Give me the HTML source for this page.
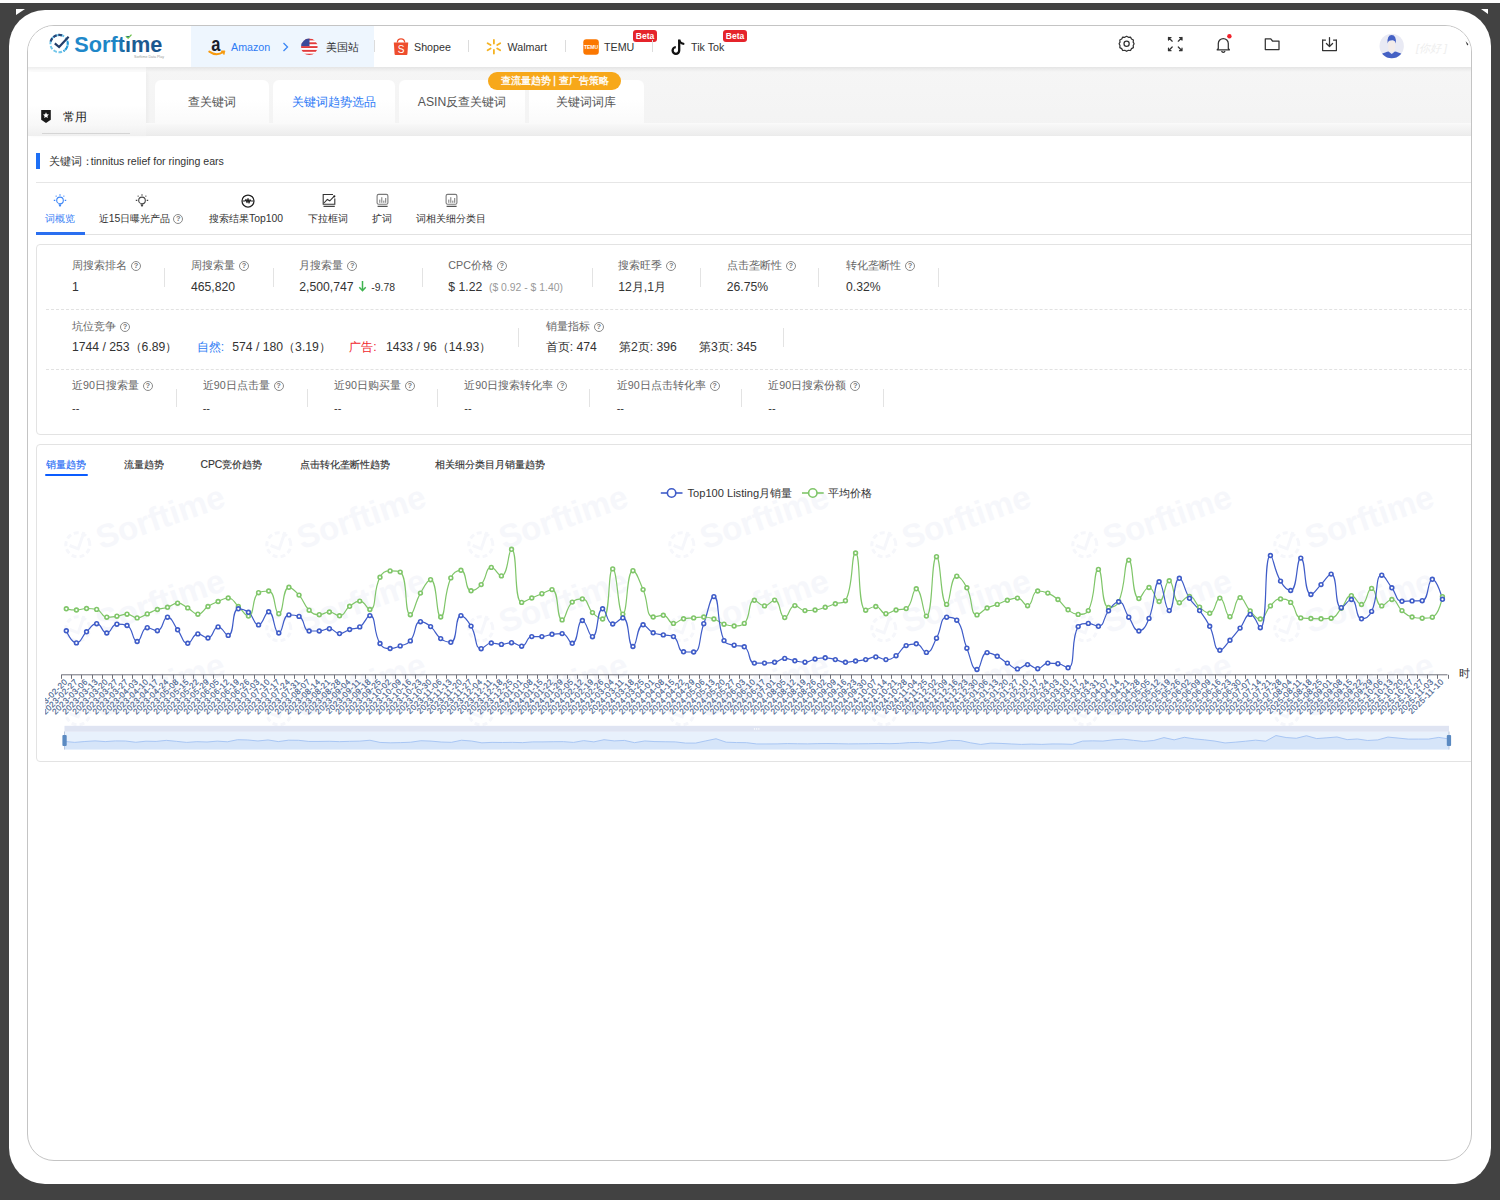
<!DOCTYPE html><html><head><meta charset="utf-8"><style>
*{margin:0;padding:0;box-sizing:border-box}
html,body{width:1500px;height:1200px;overflow:hidden;background:#424242;font-family:"Liberation Sans",sans-serif;color:#333}
.a{position:absolute;white-space:nowrap}
#outer{position:absolute;left:9px;top:10px;width:1482px;height:1174px;background:#fff;border-radius:36px}
#inner{position:absolute;left:27px;top:25px;width:1445px;height:1136px;border:1px solid #c4c4c4;border-radius:27px;overflow:hidden;background:#fff}
#c{position:absolute;left:-28px;top:-26px;width:1500px;height:1200px}
.nav{font-size:10.7px;color:#333;line-height:14px}
.sep{position:absolute;width:1px;height:12px;background:#dcdcdc}
.beta{position:absolute;background:#e5242b;color:#fff;font-size:8.5px;line-height:12px;height:12px;border-radius:3px;text-align:center;font-weight:bold}
.tab{position:absolute;top:80px;height:43px;background:linear-gradient(#fff 0,#fff 20px,#fafafa 43px);border-radius:6px 6px 0 0;font-size:12.2px;line-height:14px;color:#555;text-align:center;padding-top:15px}
.st{font-size:11px;line-height:14px;color:#333;text-align:center}
.lb{font-size:10.7px;line-height:13px;color:#666}
.vl{font-size:12.2px;line-height:15px;color:#333}
.q{display:inline-block;width:10px;height:10px;border:1px solid #8a8a8a;border-radius:50%;font-size:7.5px;line-height:8.5px;text-align:center;color:#777;vertical-align:1px;margin-left:4px;font-weight:bold}
.vs{position:absolute;width:1px;background:#e3e3e3}
.ct{font-size:10.35px;line-height:13px;color:#333;-webkit-text-stroke:0.15px}
</style></head><body><div class="a" style="left:0;top:0;width:1500px;height:3px;background:#fff"></div>
<div id="outer"></div>
<svg class="a" style="left:0;top:0" width="1500" height="20"><path d="M16 9H25L16 15Z M1481 9H1488V14Z" fill="#fff"/></svg>
<div id="inner"><div id="c"><div class="a" style="left:28px;top:26px;width:1444px;height:41px;background:#fff"></div><div class="a" style="left:191px;top:26px;width:183px;height:41px;background:#eef6fe"></div><div class="a" style="left:28px;top:67px;width:1444px;height:69px;background:linear-gradient(#f6f6f6,#f3f3f3)"></div><svg class="a" style="left:40px;top:28px" width="130" height="34" viewBox="40 28 130 34">
<defs><linearGradient id="lg" x1="0" x2="1"><stop offset="0" stop-color="#2089cb"/><stop offset=".5" stop-color="#1d84c4"/><stop offset=".58" stop-color="#1b5f96"/><stop offset="1" stop-color="#1c558c"/></linearGradient></defs>
<circle cx="59.1" cy="43.6" r="8.7" fill="none" stroke="#72c6ea" stroke-width="2" stroke-dasharray="3.6 1.7"/>
<path d="M50.7 41.5 A8.7 8.7 0 0 1 63.6 36.2" fill="none" stroke="#27477a" stroke-width="2.3" stroke-dasharray="3.6 1.7"/>
<path d="M67.4 41 A8.7 8.7 0 0 1 63.5 51.1" fill="none" stroke="#2596d4" stroke-width="2" stroke-dasharray="3.6 1.7"/>
<path d="M54.8 43.3 L59.1 47 L68.6 36.8" fill="none" stroke="#253e6a" stroke-width="2.2" stroke-linejoin="miter"/>
<text x="74.3" y="51.8" font-family="Liberation Sans" font-weight="bold" font-size="21.6" fill="url(#lg)" textLength="88" lengthAdjust="spacingAndGlyphs">Sorftime</text>
<rect x="124.5" y="37" width="6" height="4" fill="#fff"/>
<path d="M125.8 36.2 L128.2 38.2 L131.5 34.6" fill="none" stroke="#6cc04a" stroke-width="1.3"/>
<text x="134" y="57.5" font-family="Liberation Sans" font-size="3.6" fill="#999">Sorftime Data Play</text>
</svg><svg class="a" style="left:206px;top:36px" width="22" height="22" viewBox="206 36 22 22">
<text x="0" y="0" transform="translate(211.3 50.6) scale(1 1.22)" font-family="Liberation Sans" font-weight="bold" font-size="16.5" fill="#1b1f29">a</text>
<path d="M209.3 51.6 Q216.5 56.6 223.2 52" fill="none" stroke="#f79a0e" stroke-width="2" stroke-linecap="round"/>
<path d="M221.2 50.9 L224.9 50.9 L224 54.6 Z" fill="#f79a0e" stroke="#f79a0e" stroke-width=".8" stroke-linejoin="round"/>
</svg><div class="a nav" style="left:231px;top:40px;color:#2f7cf4">Amazon</div><svg class="a" style="left:281px;top:41px" width="9" height="12"><path d="M2.5 2 L6.5 6 L2.5 10" fill="none" stroke="#3a86f5" stroke-width="1.3"/></svg><svg class="a" style="left:300px;top:38px" width="19" height="18" viewBox="300 38 19 18">
<defs><clipPath id="fc"><circle cx="309.3" cy="46.8" r="8.3"/></clipPath></defs>
<g clip-path="url(#fc)"><rect x="300" y="38" width="19" height="18" fill="#fff"/>
<rect x="300" y="38.5" width="19" height="1.9" fill="#e23b3b"/><rect x="300" y="42.3" width="19" height="1.9" fill="#e23b3b"/>
<rect x="300" y="46.1" width="19" height="1.9" fill="#e23b3b"/><rect x="300" y="49.9" width="19" height="1.9" fill="#e23b3b"/>
<rect x="300" y="53.7" width="19" height="1.9" fill="#e23b3b"/>
<rect x="300" y="38" width="9.5" height="8.1" fill="#3a4a9a"/></g></svg><div class="a nav" style="left:325.5px;top:40px;">美国站</div><div class="sep" style="left:373.5px;top:40px"></div><svg class="a" style="left:392px;top:37px" width="18" height="19" viewBox="392 37 18 19">
<path d="M397.3 42.5 Q397.5 38.8 401 38.8 Q404.5 38.8 404.7 42.5" fill="none" stroke="#ee4d2d" stroke-width="1.3"/>
<path d="M393.8 42.5 H408.2 L407.4 54.2 Q407.3 55 406.5 55 H395.5 Q394.7 55 394.6 54.2 Z" fill="#ee4d2d"/>
<text x="401" y="53" text-anchor="middle" font-family="Liberation Sans" font-size="10" fill="#fff">S</text></svg><div class="a nav" style="left:414px;top:40px;">Shopee</div><div class="sep" style="left:467.5px;top:40px"></div><svg class="a" style="left:485px;top:38px" width="18" height="18" viewBox="485 38 18 18">
<g stroke="#f5b323" stroke-width="1.8" stroke-linecap="round">
<path d="M493.9 40 V43.5"/><path d="M493.9 50 V53.5"/>
<path d="M487.6 43.2 L490.6 45"/><path d="M497.2 48.5 L500.2 50.3"/>
<path d="M487.6 50.3 L490.6 48.5"/><path d="M497.2 45 L500.2 43.2"/></g></svg><div class="a nav" style="left:507.5px;top:40px;">Walmart</div><div class="sep" style="left:564.5px;top:40px"></div><svg class="a" style="left:583px;top:39px" width="16" height="16" viewBox="583 39 16 16">
<rect x="583.3" y="39.2" width="15.5" height="15.5" rx="3" fill="#fb7701"/>
<text x="591" y="48.8" text-anchor="middle" font-family="Liberation Sans" font-size="5" font-weight="bold" fill="#fff">TEMU</text></svg><div class="a nav" style="left:604px;top:40px;">TEMU</div><div class="beta" style="left:633px;top:29.5px;width:24px">Beta</div><div class="sep" style="left:651.5px;top:40px"></div><svg class="a" style="left:670px;top:38px" width="17" height="18" viewBox="670 38 17 18">
<path d="M679.2 39.5 V50.5 A3.3 3.3 0 1 1 675.8 47.2" fill="none" stroke="#111" stroke-width="2.3"/>
<path d="M679.2 40 Q680 43.5 684.3 44" fill="none" stroke="#111" stroke-width="2.2"/></svg><div class="a nav" style="left:691px;top:40px;">Tik Tok</div><div class="beta" style="left:723px;top:29.5px;width:24px">Beta</div><svg class="a" style="left:1110px;top:30px" width="240" height="30" viewBox="1110 30 240 30">
<g fill="none" stroke="#333" stroke-width="1.25" stroke-linejoin="round" stroke-linecap="round">
<path d="M1126.6 36.3 L1128.4 37.3 L1130.5 37.1 L1131.5 39 L1133.4 40 L1133.2 42.1 L1134.1 43.8 L1133.2 45.5 L1133.4 47.6 L1131.5 48.6 L1130.5 50.5 L1128.4 50.3 L1126.6 51.3 L1124.8 50.3 L1122.7 50.5 L1121.7 48.6 L1119.8 47.6 L1120 45.5 L1119.1 43.8 L1120 42.1 L1119.8 40 L1121.7 39 L1122.7 37.1 L1124.8 37.3 Z"/>
<circle cx="1126.6" cy="43.8" r="2.6"/>
<path d="M1168.5 37.5 L1172.2 41.2 M1168.5 37.5 H1171 M1168.5 37.5 V40"/>
<path d="M1182 37.5 L1178.3 41.2 M1182 37.5 H1179.5 M1182 37.5 V40"/>
<path d="M1168.5 50.7 L1172.2 47 M1168.5 50.7 H1171 M1168.5 50.7 V48.2"/>
<path d="M1182 50.7 L1178.3 47 M1182 50.7 H1179.5 M1182 50.7 V48.2"/>
<path d="M1218.3 48.5 V43.5 A5 5 0 0 1 1228.3 43.5 V48.5 L1229.5 49.8 H1217.1 Z"/>
<path d="M1221.8 51.5 Q1223.3 53.2 1224.8 51.5"/>
<path d="M1265.3 38.8 H1270.8 L1272.5 41 H1279 V49.6 H1265.3 Z"/>
<path d="M1322.6 40 V50.5 H1336.4 V40"/><path d="M1322.6 40 H1325.5 M1333.5 40 H1336.4"/>
<path d="M1329.5 37.5 V46.3 M1326.4 43.5 L1329.5 46.5 L1332.6 43.5"/>
</g>
<circle cx="1229.4" cy="36.2" r="2.2" fill="#f0212b"/>
</svg><svg class="a" style="left:1378px;top:32px" width="28" height="28" viewBox="1378 32 28 28">
<defs><clipPath id="av"><circle cx="1391.7" cy="46" r="12.2"/></clipPath></defs>
<circle cx="1391.7" cy="46" r="12.2" fill="#e9eaf4"/>
<g clip-path="url(#av)">
<path d="M1380.5 54.5 Q1386 51.8 1388.5 51.5 L1391.7 54 L1394.9 51.5 Q1397.5 51.8 1403 54.5 L1403 60 H1380.5 Z" fill="#4561c4"/>
<path d="M1388.2 41 H1395.2 V47.5 Q1395.2 51.8 1391.7 51.8 Q1388.2 51.8 1388.2 47.5 Z" fill="#f3ecea"/>
<path d="M1387.6 43.5 Q1386.8 35 1391.7 35 Q1396.6 35 1395.8 43.5 Q1395.2 40.5 1393 40.2 Q1390.5 40 1389.3 40.8 Q1388 41.6 1387.6 43.5 Z" fill="#4561c4"/>
</g></svg><div class="a " style="left:1416px;top:38px;"><span style="color:#eeeeee;font-size:11px;font-style:italic">[你好 ]</span></div><svg class="a" style="left:1462px;top:38px" width="10" height="10" viewBox="1462 38 10 10"><path d="M1465.6 41.2 L1468.4 44.3 L1467.2 45.6 Z" fill="#333"/></svg><div class="a" style="left:28px;top:67px;width:118px;height:69px;background:linear-gradient(#fff 0,#fff 38px,#f8f8f8 58px,#efefef 69px)"></div><div class="a" style="left:28px;top:72px;width:118px;height:64px;box-shadow:2px 0 3px rgba(0,0,0,.03)"></div><svg class="a" style="left:40px;top:109px" width="12" height="15" viewBox="40 109 12 15"><path d="M41.2 110 H50.8 V119.8 L46 123 L41.2 119.8 Z" fill="#1a1a1a"/><path d="M46 112.3 L46.9 114.3 L49 114.5 L47.4 115.9 L47.9 118 L46 116.9 L44.1 118 L44.6 115.9 L43 114.5 L45.1 114.3 Z" fill="#fff"/></svg><div class="a " style="left:62.5px;top:110px;font-size:12.3px;line-height:14px;color:#222">常用</div><div class="a" style="left:42px;top:133px;width:88px;height:1px;background:#d5d5d5"></div><div class="a" style="left:28px;top:67px;width:1444px;height:5px;background:linear-gradient(rgba(0,0,0,.07),rgba(0,0,0,0))"></div><div class="tab" style="left:154.6px;width:114.4px;color:#555">查关键词</div><div class="tab" style="left:273.3px;width:121.7px;color:#2b78f6">关键词趋势选品</div><div class="tab" style="left:399.2px;width:125.8px;color:#555">ASIN反查关键词</div><div class="tab" style="left:529.0px;width:114.5px;color:#555">关键词词库</div><div class="a" style="left:146px;top:123px;width:1326px;height:13px;background:linear-gradient(#fbfbfb 0,#f7f7f7 2px,#ededed 12px,#eaeaea 13px)"></div><div class="a" style="left:488.4px;top:72px;width:132.6px;height:18px;border-radius:9px;background:#f7a81a;color:#fff;font-size:10.2px;line-height:18px;text-align:center;-webkit-text-stroke:0.3px #fff">查流量趋势 | 查广告策略</div><div class="a" style="left:36px;top:153px;width:4px;height:16px;background:#1d6ff5"></div><div class="a " style="left:49.3px;top:154px;font-size:10.6px;line-height:14px;color:#333">关键词<span style="display:inline-block;width:8.5px">：</span>tinnitus relief for ringing ears</div><div class="a" style="left:36px;top:182px;width:1436px;height:1px;background:#e6e6e6"></div><svg class="a" style="left:52.4px;top:192px" width="16" height="17" viewBox="0 0 16 17"><g fill="none" stroke="#3d86f7" stroke-width="1.1"><circle cx="8" cy="8.4" r="3.3"/><path d="M8 2.3V3.8 M1.8 8.4H3.3 M12.7 8.4H14.2"/></g><g fill="#3d86f7"><rect x="3.6" y="3.6" width="1.1" height="1.1"/><rect x="11.3" y="3.6" width="1.1" height="1.1"/><path d="M6.5 12.3 H9.5 L8.7 14.6 H7.3 Z"/></g></svg><svg class="a" style="left:134.4px;top:192px" width="16" height="17" viewBox="0 0 16 17"><g fill="none" stroke="#444" stroke-width="1.1"><circle cx="8" cy="8.4" r="3.3"/><path d="M8 2.3V3.8 M1.8 8.4H3.3 M12.7 8.4H14.2"/></g><g fill="#444"><rect x="3.6" y="3.6" width="1.1" height="1.1"/><rect x="11.3" y="3.6" width="1.1" height="1.1"/><path d="M6.5 12.3 H9.5 L8.7 14.6 H7.3 Z"/></g></svg><svg class="a" style="left:239.5px;top:192.5px" width="16" height="16" viewBox="0 0 16 16"><circle cx="8" cy="8" r="6" fill="none" stroke="#222" stroke-width="1.25"/><path d="M2.5 8 H5 L6 6.5 L7 9.6 L8 5.6 L9 10 L10 6.8 L10.8 8 H13.5" fill="none" stroke="#222" stroke-width="1.2" stroke-linejoin="round"/></svg><svg class="a" style="left:321px;top:192px" width="16" height="16" viewBox="321 192 16 16"><g fill="none" stroke="#333" stroke-width="1.1"><path d="M333 194.5 H323.2 V204.2 H334.8 V198.5"/><path d="M323.5 206.4 H334.8" stroke="#444" stroke-width="1.2"/><path d="M324 203 L327.3 199.4 L329.8 200.8 L333.8 196.6"/></g><circle cx="334.3" cy="196.3" r="1.1" fill="#222"/></svg><svg class="a" style="left:376.0px;top:192px" width="14" height="16" viewBox="0 0 14 16"><g fill="none" stroke="#7a7a7a" stroke-width="1.1"><rect x="1.1" y="2.4" width="10.8" height="9.9" rx="1.5"/></g><path d="M1.6 14.4 H11.6" stroke="#555" stroke-width="1.1"/><g fill="#777"><rect x="3.3" y="7.6" width="1" height="3.2"/><rect x="5.3" y="5.2" width="1" height="5.6"/><rect x="7.3" y="8.6" width="1" height="2.2"/><rect x="9.2" y="6" width="1" height="4.8"/></g></svg><svg class="a" style="left:445.3px;top:192px" width="14" height="16" viewBox="0 0 14 16"><g fill="none" stroke="#7a7a7a" stroke-width="1.1"><rect x="1.1" y="2.4" width="10.8" height="9.9" rx="1.5"/></g><path d="M1.6 14.4 H11.6" stroke="#555" stroke-width="1.1"/><g fill="#777"><rect x="3.3" y="7.6" width="1" height="3.2"/><rect x="5.3" y="5.2" width="1" height="5.6"/><rect x="7.3" y="8.6" width="1" height="2.2"/><rect x="9.2" y="6" width="1" height="4.8"/></g></svg><div class="a " style="left:45.3px;top:211.5px;font-size:10.4px;line-height:13px;color:#3b82f6">词概览</div><div class="a " style="left:98.7px;top:211.5px;font-size:10.4px;line-height:13px;color:#333">近15日曝光产品<span class="q" style="margin-left:3px">?</span></div><div class="a " style="left:209px;top:211.5px;font-size:10.4px;line-height:13px;color:#333">搜索结果Top100</div><div class="a " style="left:308px;top:211.5px;font-size:10.4px;line-height:13px;color:#333">下拉框词</div><div class="a " style="left:372px;top:211.5px;font-size:10.4px;line-height:13px;color:#333">扩词</div><div class="a " style="left:415.6px;top:211.5px;font-size:10.4px;line-height:13px;color:#333">词相关细分类目</div><div class="a" style="left:36px;top:234px;width:1436px;height:1px;background:#e2e2e2"></div><div class="a" style="left:36px;top:232px;width:49px;height:2.5px;background:#2a6ff0"></div><div class="a" style="left:36px;top:244px;width:1460px;height:191px;border:1px solid #e3e3e3;border-radius:4px"></div><div class="a lb" style="left:72px;top:258.8px;">周搜索排名<span class="q">?</span></div><div class="a vl" style="left:72px;top:279.5px;">1</div><div class="a lb" style="left:191px;top:258.8px;">周搜索量<span class="q">?</span></div><div class="a vl" style="left:191px;top:279.5px;">465,820</div><div class="a lb" style="left:299.3px;top:258.8px;">月搜索量<span class="q">?</span></div><div class="a vl" style="left:299.3px;top:279.5px;">2,500,747 <svg width="9" height="12" style="vertical-align:-1px;margin:0 1px" viewBox="0 0 9 12"><path d="M4.5 1 V10.5 M1.3 7.3 L4.5 10.7 L7.7 7.3" fill="none" stroke="#3fb34f" stroke-width="1.5"/></svg> <span style="font-size:10.4px">-9.78</span></div><div class="a lb" style="left:448.3px;top:258.8px;">CPC价格<span class="q">?</span></div><div class="a vl" style="left:448.3px;top:279.5px;">$ 1.22 &nbsp;<span style="font-size:10.4px;color:#999">($ 0.92 - $ 1.40)</span></div><div class="a lb" style="left:618.3px;top:258.8px;">搜索旺季<span class="q">?</span></div><div class="a vl" style="left:618.3px;top:279.5px;">12月,1月</div><div class="a lb" style="left:726.7px;top:258.8px;">点击垄断性<span class="q">?</span></div><div class="a vl" style="left:726.7px;top:279.5px;">26.75%</div><div class="a lb" style="left:846px;top:258.8px;">转化垄断性<span class="q">?</span></div><div class="a vl" style="left:846px;top:279.5px;">0.32%</div><div class="vs" style="left:163.5px;top:267.5px;height:19px"></div><div class="vs" style="left:272.7px;top:267.5px;height:19px"></div><div class="vs" style="left:421.7px;top:267.5px;height:19px"></div><div class="vs" style="left:591.7px;top:267.5px;height:19px"></div><div class="vs" style="left:700.0px;top:267.5px;height:19px"></div><div class="vs" style="left:818.3px;top:267.5px;height:19px"></div><div class="vs" style="left:938.3px;top:267.5px;height:19px"></div><div class="a" style="left:46px;top:309px;width:1426px;height:0;border-top:1px dashed #e2e2e2"></div><div class="a lb" style="left:72px;top:319.8px;">坑位竞争<span class="q">?</span></div><div class="a vl" style="left:72px;top:340px;">1744 / 253（6.89）</div><div class="a vl" style="left:196.7px;top:340px;"><span style="color:#2f7cf4">自然:</span></div><div class="a vl" style="left:232.3px;top:340px;">574 / 180（3.19）</div><div class="a vl" style="left:349.3px;top:340px;"><span style="color:#f0282e">广告:</span></div><div class="a vl" style="left:386px;top:340px;">1433 / 96（14.93）</div><div class="vs" style="left:518.3px;top:328px;height:19px"></div><div class="a lb" style="left:545.7px;top:319.8px;">销量指标<span class="q">?</span></div><div class="a vl" style="left:545.7px;top:340px;">首页: 474</div><div class="a vl" style="left:619px;top:340px;">第2页: 396</div><div class="a vl" style="left:699px;top:340px;">第3页: 345</div><div class="vs" style="left:783.3px;top:328px;height:19px"></div><div class="a" style="left:46px;top:369px;width:1426px;height:0;border-top:1px dashed #e2e2e2"></div><div class="a lb" style="left:72px;top:379.3px;">近90日搜索量<span class="q">?</span></div><div class="a vl" style="left:72px;top:401px;font-size:11px">--</div><div class="a lb" style="left:202.7px;top:379.3px;">近90日点击量<span class="q">?</span></div><div class="a vl" style="left:202.7px;top:401px;font-size:11px">--</div><div class="a lb" style="left:334px;top:379.3px;">近90日购买量<span class="q">?</span></div><div class="a vl" style="left:334px;top:401px;font-size:11px">--</div><div class="a lb" style="left:464.3px;top:379.3px;">近90日搜索转化率<span class="q">?</span></div><div class="a vl" style="left:464.3px;top:401px;font-size:11px">--</div><div class="a lb" style="left:616.7px;top:379.3px;">近90日点击转化率<span class="q">?</span></div><div class="a vl" style="left:616.7px;top:401px;font-size:11px">--</div><div class="a lb" style="left:768.3px;top:379.3px;">近90日搜索份额<span class="q">?</span></div><div class="a vl" style="left:768.3px;top:401px;font-size:11px">--</div><div class="vs" style="left:176.0px;top:388.5px;height:18px"></div><div class="vs" style="left:306.7px;top:388.5px;height:18px"></div><div class="vs" style="left:437.3px;top:388.5px;height:18px"></div><div class="vs" style="left:589.3px;top:388.5px;height:18px"></div><div class="vs" style="left:741.0px;top:388.5px;height:18px"></div><div class="vs" style="left:882.7px;top:388.5px;height:18px"></div><div class="a" style="left:36px;top:444px;width:1460px;height:318px;border:1px solid #e3e3e3;border-radius:4px"></div><div class="a ct" style="left:45.8px;top:457.5px;color:#1f6bf5">销量趋势</div><div class="a ct" style="left:123.5px;top:457.5px;color:#333">流量趋势</div><div class="a ct" style="left:200.5px;top:457.5px;color:#333">CPC竞价趋势</div><div class="a ct" style="left:300px;top:457.5px;color:#333">点击转化垄断性趋势</div><div class="a ct" style="left:435px;top:457.5px;color:#333">相关细分类目月销量趋势</div><div class="a" style="left:45px;top:473.6px;width:43px;height:2px;border-radius:1px;background:#0a5cff"></div><svg class="a" style="left:45px;top:480px" width="1426" height="280" viewBox="45 480 1426 280"><g transform="translate(142 510) rotate(-19)"><circle cx="-72" cy="12" r="12" fill="none" stroke="#f6f7fb" stroke-width="3" stroke-dasharray="5 3"/><path d="M-80 10 L-73 16 L-62 2" fill="none" stroke="#f6f7fb" stroke-width="3"/><text x="-52" y="24" font-family="Liberation Sans" font-weight="bold" font-size="33" fill="#f6f7fb">Sorftime</text></g><g transform="translate(343 510) rotate(-19)"><circle cx="-72" cy="12" r="12" fill="none" stroke="#f6f7fb" stroke-width="3" stroke-dasharray="5 3"/><path d="M-80 10 L-73 16 L-62 2" fill="none" stroke="#f6f7fb" stroke-width="3"/><text x="-52" y="24" font-family="Liberation Sans" font-weight="bold" font-size="33" fill="#f6f7fb">Sorftime</text></g><g transform="translate(545 510) rotate(-19)"><circle cx="-72" cy="12" r="12" fill="none" stroke="#f6f7fb" stroke-width="3" stroke-dasharray="5 3"/><path d="M-80 10 L-73 16 L-62 2" fill="none" stroke="#f6f7fb" stroke-width="3"/><text x="-52" y="24" font-family="Liberation Sans" font-weight="bold" font-size="33" fill="#f6f7fb">Sorftime</text></g><g transform="translate(746 510) rotate(-19)"><circle cx="-72" cy="12" r="12" fill="none" stroke="#f6f7fb" stroke-width="3" stroke-dasharray="5 3"/><path d="M-80 10 L-73 16 L-62 2" fill="none" stroke="#f6f7fb" stroke-width="3"/><text x="-52" y="24" font-family="Liberation Sans" font-weight="bold" font-size="33" fill="#f6f7fb">Sorftime</text></g><g transform="translate(948 510) rotate(-19)"><circle cx="-72" cy="12" r="12" fill="none" stroke="#f6f7fb" stroke-width="3" stroke-dasharray="5 3"/><path d="M-80 10 L-73 16 L-62 2" fill="none" stroke="#f6f7fb" stroke-width="3"/><text x="-52" y="24" font-family="Liberation Sans" font-weight="bold" font-size="33" fill="#f6f7fb">Sorftime</text></g><g transform="translate(1149 510) rotate(-19)"><circle cx="-72" cy="12" r="12" fill="none" stroke="#f6f7fb" stroke-width="3" stroke-dasharray="5 3"/><path d="M-80 10 L-73 16 L-62 2" fill="none" stroke="#f6f7fb" stroke-width="3"/><text x="-52" y="24" font-family="Liberation Sans" font-weight="bold" font-size="33" fill="#f6f7fb">Sorftime</text></g><g transform="translate(1351 510) rotate(-19)"><circle cx="-72" cy="12" r="12" fill="none" stroke="#f6f7fb" stroke-width="3" stroke-dasharray="5 3"/><path d="M-80 10 L-73 16 L-62 2" fill="none" stroke="#f6f7fb" stroke-width="3"/><text x="-52" y="24" font-family="Liberation Sans" font-weight="bold" font-size="33" fill="#f6f7fb">Sorftime</text></g><g transform="translate(1552 510) rotate(-19)"><circle cx="-72" cy="12" r="12" fill="none" stroke="#f6f7fb" stroke-width="3" stroke-dasharray="5 3"/><path d="M-80 10 L-73 16 L-62 2" fill="none" stroke="#f6f7fb" stroke-width="3"/><text x="-52" y="24" font-family="Liberation Sans" font-weight="bold" font-size="33" fill="#f6f7fb">Sorftime</text></g><g transform="translate(142 594) rotate(-19)"><circle cx="-72" cy="12" r="12" fill="none" stroke="#f6f7fb" stroke-width="3" stroke-dasharray="5 3"/><path d="M-80 10 L-73 16 L-62 2" fill="none" stroke="#f6f7fb" stroke-width="3"/><text x="-52" y="24" font-family="Liberation Sans" font-weight="bold" font-size="33" fill="#f6f7fb">Sorftime</text></g><g transform="translate(343 594) rotate(-19)"><circle cx="-72" cy="12" r="12" fill="none" stroke="#f6f7fb" stroke-width="3" stroke-dasharray="5 3"/><path d="M-80 10 L-73 16 L-62 2" fill="none" stroke="#f6f7fb" stroke-width="3"/><text x="-52" y="24" font-family="Liberation Sans" font-weight="bold" font-size="33" fill="#f6f7fb">Sorftime</text></g><g transform="translate(545 594) rotate(-19)"><circle cx="-72" cy="12" r="12" fill="none" stroke="#f6f7fb" stroke-width="3" stroke-dasharray="5 3"/><path d="M-80 10 L-73 16 L-62 2" fill="none" stroke="#f6f7fb" stroke-width="3"/><text x="-52" y="24" font-family="Liberation Sans" font-weight="bold" font-size="33" fill="#f6f7fb">Sorftime</text></g><g transform="translate(746 594) rotate(-19)"><circle cx="-72" cy="12" r="12" fill="none" stroke="#f6f7fb" stroke-width="3" stroke-dasharray="5 3"/><path d="M-80 10 L-73 16 L-62 2" fill="none" stroke="#f6f7fb" stroke-width="3"/><text x="-52" y="24" font-family="Liberation Sans" font-weight="bold" font-size="33" fill="#f6f7fb">Sorftime</text></g><g transform="translate(948 594) rotate(-19)"><circle cx="-72" cy="12" r="12" fill="none" stroke="#f6f7fb" stroke-width="3" stroke-dasharray="5 3"/><path d="M-80 10 L-73 16 L-62 2" fill="none" stroke="#f6f7fb" stroke-width="3"/><text x="-52" y="24" font-family="Liberation Sans" font-weight="bold" font-size="33" fill="#f6f7fb">Sorftime</text></g><g transform="translate(1149 594) rotate(-19)"><circle cx="-72" cy="12" r="12" fill="none" stroke="#f6f7fb" stroke-width="3" stroke-dasharray="5 3"/><path d="M-80 10 L-73 16 L-62 2" fill="none" stroke="#f6f7fb" stroke-width="3"/><text x="-52" y="24" font-family="Liberation Sans" font-weight="bold" font-size="33" fill="#f6f7fb">Sorftime</text></g><g transform="translate(1351 594) rotate(-19)"><circle cx="-72" cy="12" r="12" fill="none" stroke="#f6f7fb" stroke-width="3" stroke-dasharray="5 3"/><path d="M-80 10 L-73 16 L-62 2" fill="none" stroke="#f6f7fb" stroke-width="3"/><text x="-52" y="24" font-family="Liberation Sans" font-weight="bold" font-size="33" fill="#f6f7fb">Sorftime</text></g><g transform="translate(1552 594) rotate(-19)"><circle cx="-72" cy="12" r="12" fill="none" stroke="#f6f7fb" stroke-width="3" stroke-dasharray="5 3"/><path d="M-80 10 L-73 16 L-62 2" fill="none" stroke="#f6f7fb" stroke-width="3"/><text x="-52" y="24" font-family="Liberation Sans" font-weight="bold" font-size="33" fill="#f6f7fb">Sorftime</text></g><g transform="translate(142 678) rotate(-19)"><circle cx="-72" cy="12" r="12" fill="none" stroke="#f6f7fb" stroke-width="3" stroke-dasharray="5 3"/><path d="M-80 10 L-73 16 L-62 2" fill="none" stroke="#f6f7fb" stroke-width="3"/><text x="-52" y="24" font-family="Liberation Sans" font-weight="bold" font-size="33" fill="#f6f7fb">Sorftime</text></g><g transform="translate(343 678) rotate(-19)"><circle cx="-72" cy="12" r="12" fill="none" stroke="#f6f7fb" stroke-width="3" stroke-dasharray="5 3"/><path d="M-80 10 L-73 16 L-62 2" fill="none" stroke="#f6f7fb" stroke-width="3"/><text x="-52" y="24" font-family="Liberation Sans" font-weight="bold" font-size="33" fill="#f6f7fb">Sorftime</text></g><g transform="translate(545 678) rotate(-19)"><circle cx="-72" cy="12" r="12" fill="none" stroke="#f6f7fb" stroke-width="3" stroke-dasharray="5 3"/><path d="M-80 10 L-73 16 L-62 2" fill="none" stroke="#f6f7fb" stroke-width="3"/><text x="-52" y="24" font-family="Liberation Sans" font-weight="bold" font-size="33" fill="#f6f7fb">Sorftime</text></g><g transform="translate(746 678) rotate(-19)"><circle cx="-72" cy="12" r="12" fill="none" stroke="#f6f7fb" stroke-width="3" stroke-dasharray="5 3"/><path d="M-80 10 L-73 16 L-62 2" fill="none" stroke="#f6f7fb" stroke-width="3"/><text x="-52" y="24" font-family="Liberation Sans" font-weight="bold" font-size="33" fill="#f6f7fb">Sorftime</text></g><g transform="translate(948 678) rotate(-19)"><circle cx="-72" cy="12" r="12" fill="none" stroke="#f6f7fb" stroke-width="3" stroke-dasharray="5 3"/><path d="M-80 10 L-73 16 L-62 2" fill="none" stroke="#f6f7fb" stroke-width="3"/><text x="-52" y="24" font-family="Liberation Sans" font-weight="bold" font-size="33" fill="#f6f7fb">Sorftime</text></g><g transform="translate(1149 678) rotate(-19)"><circle cx="-72" cy="12" r="12" fill="none" stroke="#f6f7fb" stroke-width="3" stroke-dasharray="5 3"/><path d="M-80 10 L-73 16 L-62 2" fill="none" stroke="#f6f7fb" stroke-width="3"/><text x="-52" y="24" font-family="Liberation Sans" font-weight="bold" font-size="33" fill="#f6f7fb">Sorftime</text></g><g transform="translate(1351 678) rotate(-19)"><circle cx="-72" cy="12" r="12" fill="none" stroke="#f6f7fb" stroke-width="3" stroke-dasharray="5 3"/><path d="M-80 10 L-73 16 L-62 2" fill="none" stroke="#f6f7fb" stroke-width="3"/><text x="-52" y="24" font-family="Liberation Sans" font-weight="bold" font-size="33" fill="#f6f7fb">Sorftime</text></g><g transform="translate(1552 678) rotate(-19)"><circle cx="-72" cy="12" r="12" fill="none" stroke="#f6f7fb" stroke-width="3" stroke-dasharray="5 3"/><path d="M-80 10 L-73 16 L-62 2" fill="none" stroke="#f6f7fb" stroke-width="3"/><text x="-52" y="24" font-family="Liberation Sans" font-weight="bold" font-size="33" fill="#f6f7fb">Sorftime</text></g></svg><svg class="a" style="left:655px;top:485px" width="230" height="16" viewBox="655 485 230 16">
<path d="M660.8 493 H682.5" stroke="#3f5cc8" stroke-width="1.6"/><circle cx="671.6" cy="493" r="4.2" fill="#fff" stroke="#3f5cc8" stroke-width="1.6"/>
<path d="M802 493 H823.7" stroke="#80c66a" stroke-width="1.6"/><circle cx="812.8" cy="493" r="4.2" fill="#fff" stroke="#80c66a" stroke-width="1.6"/>
</svg><div class="a " style="left:687.5px;top:486px;font-size:11.1px;line-height:14px;color:#333">Top100 Listing月销量</div><div class="a " style="left:828px;top:486px;font-size:11.1px;line-height:14px;color:#333">平均价格</div><svg width="1426" height="250" viewBox="45 480 1426 250" style="position:absolute;left:45px;top:480px;overflow:hidden"><line x1="61.25" y1="674.80" x2="1447.50" y2="674.80" stroke="#6e7079" stroke-width="1"/><path d="M61.50 674.80V678.80M71.50 674.80V678.80M81.50 674.80V678.80M92.50 674.80V678.80M102.50 674.80V678.80M112.50 674.80V678.80M122.50 674.80V678.80M132.50 674.80V678.80M142.50 674.80V678.80M152.50 674.80V678.80M162.50 674.80V678.80M173.50 674.80V678.80M183.50 674.80V678.80M193.50 674.80V678.80M203.50 674.80V678.80M213.50 674.80V678.80M223.50 674.80V678.80M233.50 674.80V678.80M243.50 674.80V678.80M254.50 674.80V678.80M264.50 674.80V678.80M274.50 674.80V678.80M284.50 674.80V678.80M294.50 674.80V678.80M304.50 674.80V678.80M314.50 674.80V678.80M324.50 674.80V678.80M334.50 674.80V678.80M345.50 674.80V678.80M355.50 674.80V678.80M365.50 674.80V678.80M375.50 674.80V678.80M385.50 674.80V678.80M395.50 674.80V678.80M405.50 674.80V678.80M415.50 674.80V678.80M426.50 674.80V678.80M436.50 674.80V678.80M446.50 674.80V678.80M456.50 674.80V678.80M466.50 674.80V678.80M476.50 674.80V678.80M486.50 674.80V678.80M496.50 674.80V678.80M506.50 674.80V678.80M517.50 674.80V678.80M527.50 674.80V678.80M537.50 674.80V678.80M547.50 674.80V678.80M557.50 674.80V678.80M567.50 674.80V678.80M577.50 674.80V678.80M587.50 674.80V678.80M598.50 674.80V678.80M608.50 674.80V678.80M618.50 674.80V678.80M628.50 674.80V678.80M638.50 674.80V678.80M648.50 674.80V678.80M658.50 674.80V678.80M668.50 674.80V678.80M678.50 674.80V678.80M689.50 674.80V678.80M699.50 674.80V678.80M709.50 674.80V678.80M719.50 674.80V678.80M729.50 674.80V678.80M739.50 674.80V678.80M749.50 674.80V678.80M759.50 674.80V678.80M770.50 674.80V678.80M780.50 674.80V678.80M790.50 674.80V678.80M800.50 674.80V678.80M810.50 674.80V678.80M820.50 674.80V678.80M830.50 674.80V678.80M840.50 674.80V678.80M851.50 674.80V678.80M861.50 674.80V678.80M871.50 674.80V678.80M881.50 674.80V678.80M891.50 674.80V678.80M901.50 674.80V678.80M911.50 674.80V678.80M921.50 674.80V678.80M931.50 674.80V678.80M942.50 674.80V678.80M952.50 674.80V678.80M962.50 674.80V678.80M972.50 674.80V678.80M982.50 674.80V678.80M992.50 674.80V678.80M1002.50 674.80V678.80M1012.50 674.80V678.80M1023.50 674.80V678.80M1033.50 674.80V678.80M1043.50 674.80V678.80M1053.50 674.80V678.80M1063.50 674.80V678.80M1073.50 674.80V678.80M1083.50 674.80V678.80M1093.50 674.80V678.80M1103.50 674.80V678.80M1114.50 674.80V678.80M1124.50 674.80V678.80M1134.50 674.80V678.80M1144.50 674.80V678.80M1154.50 674.80V678.80M1164.50 674.80V678.80M1174.50 674.80V678.80M1184.50 674.80V678.80M1195.50 674.80V678.80M1205.50 674.80V678.80M1215.50 674.80V678.80M1225.50 674.80V678.80M1235.50 674.80V678.80M1245.50 674.80V678.80M1255.50 674.80V678.80M1265.50 674.80V678.80M1275.50 674.80V678.80M1286.50 674.80V678.80M1296.50 674.80V678.80M1306.50 674.80V678.80M1316.50 674.80V678.80M1326.50 674.80V678.80M1336.50 674.80V678.80M1346.50 674.80V678.80M1356.50 674.80V678.80M1367.50 674.80V678.80M1377.50 674.80V678.80M1387.50 674.80V678.80M1397.50 674.80V678.80M1407.50 674.80V678.80M1417.50 674.80V678.80M1427.50 674.80V678.80M1437.50 674.80V678.80M1448.50 674.80V678.80" stroke="#6e7079" stroke-width="1" fill="none"/><g font-family="Liberation Sans, sans-serif" font-size="8.2" letter-spacing="0.45" fill="#4b6590" stroke="#4b6590" stroke-width="0.2"><text transform="translate(66.31 680.40) rotate(-45)" text-anchor="end" dominant-baseline="central">2023-02-20</text><text transform="translate(76.43 680.40) rotate(-45)" text-anchor="end" dominant-baseline="central">2023-02-27</text><text transform="translate(86.55 680.40) rotate(-45)" text-anchor="end" dominant-baseline="central">2023-03-06</text><text transform="translate(96.67 680.40) rotate(-45)" text-anchor="end" dominant-baseline="central">2023-03-13</text><text transform="translate(106.78 680.40) rotate(-45)" text-anchor="end" dominant-baseline="central">2023-03-20</text><text transform="translate(116.90 680.40) rotate(-45)" text-anchor="end" dominant-baseline="central">2023-03-27</text><text transform="translate(127.02 680.40) rotate(-45)" text-anchor="end" dominant-baseline="central">2023-03-27</text><text transform="translate(137.14 680.40) rotate(-45)" text-anchor="end" dominant-baseline="central">2023-04-03</text><text transform="translate(147.26 680.40) rotate(-45)" text-anchor="end" dominant-baseline="central">2023-04-10</text><text transform="translate(157.38 680.40) rotate(-45)" text-anchor="end" dominant-baseline="central">2023-04-17</text><text transform="translate(167.50 680.40) rotate(-45)" text-anchor="end" dominant-baseline="central">2023-04-24</text><text transform="translate(177.61 680.40) rotate(-45)" text-anchor="end" dominant-baseline="central">2023-05-08</text><text transform="translate(187.73 680.40) rotate(-45)" text-anchor="end" dominant-baseline="central">2023-05-15</text><text transform="translate(197.85 680.40) rotate(-45)" text-anchor="end" dominant-baseline="central">2023-05-22</text><text transform="translate(207.97 680.40) rotate(-45)" text-anchor="end" dominant-baseline="central">2023-05-29</text><text transform="translate(218.09 680.40) rotate(-45)" text-anchor="end" dominant-baseline="central">2023-06-05</text><text transform="translate(228.21 680.40) rotate(-45)" text-anchor="end" dominant-baseline="central">2023-06-12</text><text transform="translate(238.33 680.40) rotate(-45)" text-anchor="end" dominant-baseline="central">2023-06-19</text><text transform="translate(248.44 680.40) rotate(-45)" text-anchor="end" dominant-baseline="central">2023-06-26</text><text transform="translate(258.56 680.40) rotate(-45)" text-anchor="end" dominant-baseline="central">2023-07-03</text><text transform="translate(268.68 680.40) rotate(-45)" text-anchor="end" dominant-baseline="central">2023-07-10</text><text transform="translate(278.80 680.40) rotate(-45)" text-anchor="end" dominant-baseline="central">2023-07-17</text><text transform="translate(288.92 680.40) rotate(-45)" text-anchor="end" dominant-baseline="central">2023-07-24</text><text transform="translate(299.04 680.40) rotate(-45)" text-anchor="end" dominant-baseline="central">2023-07-31</text><text transform="translate(309.16 680.40) rotate(-45)" text-anchor="end" dominant-baseline="central">2023-08-07</text><text transform="translate(319.27 680.40) rotate(-45)" text-anchor="end" dominant-baseline="central">2023-08-14</text><text transform="translate(329.39 680.40) rotate(-45)" text-anchor="end" dominant-baseline="central">2023-08-21</text><text transform="translate(339.51 680.40) rotate(-45)" text-anchor="end" dominant-baseline="central">2023-08-28</text><text transform="translate(349.63 680.40) rotate(-45)" text-anchor="end" dominant-baseline="central">2023-09-04</text><text transform="translate(359.75 680.40) rotate(-45)" text-anchor="end" dominant-baseline="central">2023-09-11</text><text transform="translate(369.87 680.40) rotate(-45)" text-anchor="end" dominant-baseline="central">2023-09-18</text><text transform="translate(379.99 680.40) rotate(-45)" text-anchor="end" dominant-baseline="central">2023-09-25</text><text transform="translate(390.10 680.40) rotate(-45)" text-anchor="end" dominant-baseline="central">2023-10-02</text><text transform="translate(400.22 680.40) rotate(-45)" text-anchor="end" dominant-baseline="central">2023-10-09</text><text transform="translate(410.34 680.40) rotate(-45)" text-anchor="end" dominant-baseline="central">2023-10-16</text><text transform="translate(420.46 680.40) rotate(-45)" text-anchor="end" dominant-baseline="central">2023-10-23</text><text transform="translate(430.58 680.40) rotate(-45)" text-anchor="end" dominant-baseline="central">2023-10-30</text><text transform="translate(440.70 680.40) rotate(-45)" text-anchor="end" dominant-baseline="central">2023-11-06</text><text transform="translate(450.82 680.40) rotate(-45)" text-anchor="end" dominant-baseline="central">2023-11-13</text><text transform="translate(460.94 680.40) rotate(-45)" text-anchor="end" dominant-baseline="central">2023-11-20</text><text transform="translate(471.05 680.40) rotate(-45)" text-anchor="end" dominant-baseline="central">2023-11-27</text><text transform="translate(481.17 680.40) rotate(-45)" text-anchor="end" dominant-baseline="central">2023-12-04</text><text transform="translate(491.29 680.40) rotate(-45)" text-anchor="end" dominant-baseline="central">2023-12-11</text><text transform="translate(501.41 680.40) rotate(-45)" text-anchor="end" dominant-baseline="central">2023-12-18</text><text transform="translate(511.53 680.40) rotate(-45)" text-anchor="end" dominant-baseline="central">2023-12-25</text><text transform="translate(521.65 680.40) rotate(-45)" text-anchor="end" dominant-baseline="central">2024-01-01</text><text transform="translate(531.77 680.40) rotate(-45)" text-anchor="end" dominant-baseline="central">2024-01-08</text><text transform="translate(541.88 680.40) rotate(-45)" text-anchor="end" dominant-baseline="central">2024-01-15</text><text transform="translate(552.00 680.40) rotate(-45)" text-anchor="end" dominant-baseline="central">2024-01-22</text><text transform="translate(562.12 680.40) rotate(-45)" text-anchor="end" dominant-baseline="central">2024-01-29</text><text transform="translate(572.24 680.40) rotate(-45)" text-anchor="end" dominant-baseline="central">2024-02-05</text><text transform="translate(582.36 680.40) rotate(-45)" text-anchor="end" dominant-baseline="central">2024-02-12</text><text transform="translate(592.48 680.40) rotate(-45)" text-anchor="end" dominant-baseline="central">2024-02-19</text><text transform="translate(602.60 680.40) rotate(-45)" text-anchor="end" dominant-baseline="central">2024-02-26</text><text transform="translate(612.71 680.40) rotate(-45)" text-anchor="end" dominant-baseline="central">2024-03-04</text><text transform="translate(622.83 680.40) rotate(-45)" text-anchor="end" dominant-baseline="central">2024-03-11</text><text transform="translate(632.95 680.40) rotate(-45)" text-anchor="end" dominant-baseline="central">2024-03-18</text><text transform="translate(643.07 680.40) rotate(-45)" text-anchor="end" dominant-baseline="central">2024-03-25</text><text transform="translate(653.19 680.40) rotate(-45)" text-anchor="end" dominant-baseline="central">2024-04-01</text><text transform="translate(663.31 680.40) rotate(-45)" text-anchor="end" dominant-baseline="central">2024-04-08</text><text transform="translate(673.43 680.40) rotate(-45)" text-anchor="end" dominant-baseline="central">2024-04-15</text><text transform="translate(683.54 680.40) rotate(-45)" text-anchor="end" dominant-baseline="central">2024-04-22</text><text transform="translate(693.66 680.40) rotate(-45)" text-anchor="end" dominant-baseline="central">2024-04-29</text><text transform="translate(703.78 680.40) rotate(-45)" text-anchor="end" dominant-baseline="central">2024-05-06</text><text transform="translate(713.90 680.40) rotate(-45)" text-anchor="end" dominant-baseline="central">2024-05-13</text><text transform="translate(724.02 680.40) rotate(-45)" text-anchor="end" dominant-baseline="central">2024-05-20</text><text transform="translate(734.14 680.40) rotate(-45)" text-anchor="end" dominant-baseline="central">2024-05-27</text><text transform="translate(744.26 680.40) rotate(-45)" text-anchor="end" dominant-baseline="central">2024-06-03</text><text transform="translate(754.38 680.40) rotate(-45)" text-anchor="end" dominant-baseline="central">2024-06-10</text><text transform="translate(764.49 680.40) rotate(-45)" text-anchor="end" dominant-baseline="central">2024-06-17</text><text transform="translate(774.61 680.40) rotate(-45)" text-anchor="end" dominant-baseline="central">2024-07-01</text><text transform="translate(784.73 680.40) rotate(-45)" text-anchor="end" dominant-baseline="central">2024-08-05</text><text transform="translate(794.85 680.40) rotate(-45)" text-anchor="end" dominant-baseline="central">2024-08-12</text><text transform="translate(804.97 680.40) rotate(-45)" text-anchor="end" dominant-baseline="central">2024-08-19</text><text transform="translate(815.09 680.40) rotate(-45)" text-anchor="end" dominant-baseline="central">2024-08-26</text><text transform="translate(825.21 680.40) rotate(-45)" text-anchor="end" dominant-baseline="central">2024-09-02</text><text transform="translate(835.32 680.40) rotate(-45)" text-anchor="end" dominant-baseline="central">2024-09-09</text><text transform="translate(845.44 680.40) rotate(-45)" text-anchor="end" dominant-baseline="central">2024-09-16</text><text transform="translate(855.56 680.40) rotate(-45)" text-anchor="end" dominant-baseline="central">2024-09-23</text><text transform="translate(865.68 680.40) rotate(-45)" text-anchor="end" dominant-baseline="central">2024-09-30</text><text transform="translate(875.80 680.40) rotate(-45)" text-anchor="end" dominant-baseline="central">2024-10-07</text><text transform="translate(885.92 680.40) rotate(-45)" text-anchor="end" dominant-baseline="central">2024-10-14</text><text transform="translate(896.04 680.40) rotate(-45)" text-anchor="end" dominant-baseline="central">2024-10-21</text><text transform="translate(906.15 680.40) rotate(-45)" text-anchor="end" dominant-baseline="central">2024-10-28</text><text transform="translate(916.27 680.40) rotate(-45)" text-anchor="end" dominant-baseline="central">2024-11-04</text><text transform="translate(926.39 680.40) rotate(-45)" text-anchor="end" dominant-baseline="central">2024-11-25</text><text transform="translate(936.51 680.40) rotate(-45)" text-anchor="end" dominant-baseline="central">2024-12-02</text><text transform="translate(946.63 680.40) rotate(-45)" text-anchor="end" dominant-baseline="central">2024-12-09</text><text transform="translate(956.75 680.40) rotate(-45)" text-anchor="end" dominant-baseline="central">2024-12-16</text><text transform="translate(966.87 680.40) rotate(-45)" text-anchor="end" dominant-baseline="central">2024-12-23</text><text transform="translate(976.98 680.40) rotate(-45)" text-anchor="end" dominant-baseline="central">2024-12-30</text><text transform="translate(987.10 680.40) rotate(-45)" text-anchor="end" dominant-baseline="central">2025-01-06</text><text transform="translate(997.22 680.40) rotate(-45)" text-anchor="end" dominant-baseline="central">2025-01-13</text><text transform="translate(1007.34 680.40) rotate(-45)" text-anchor="end" dominant-baseline="central">2025-01-20</text><text transform="translate(1017.46 680.40) rotate(-45)" text-anchor="end" dominant-baseline="central">2025-01-27</text><text transform="translate(1027.58 680.40) rotate(-45)" text-anchor="end" dominant-baseline="central">2025-02-10</text><text transform="translate(1037.70 680.40) rotate(-45)" text-anchor="end" dominant-baseline="central">2025-02-17</text><text transform="translate(1047.81 680.40) rotate(-45)" text-anchor="end" dominant-baseline="central">2025-02-24</text><text transform="translate(1057.93 680.40) rotate(-45)" text-anchor="end" dominant-baseline="central">2025-03-03</text><text transform="translate(1068.05 680.40) rotate(-45)" text-anchor="end" dominant-baseline="central">2025-03-10</text><text transform="translate(1078.17 680.40) rotate(-45)" text-anchor="end" dominant-baseline="central">2025-03-17</text><text transform="translate(1088.29 680.40) rotate(-45)" text-anchor="end" dominant-baseline="central">2025-03-24</text><text transform="translate(1098.41 680.40) rotate(-45)" text-anchor="end" dominant-baseline="central">2025-03-31</text><text transform="translate(1108.53 680.40) rotate(-45)" text-anchor="end" dominant-baseline="central">2025-04-07</text><text transform="translate(1118.65 680.40) rotate(-45)" text-anchor="end" dominant-baseline="central">2025-04-14</text><text transform="translate(1128.76 680.40) rotate(-45)" text-anchor="end" dominant-baseline="central">2025-04-21</text><text transform="translate(1138.88 680.40) rotate(-45)" text-anchor="end" dominant-baseline="central">2025-04-28</text><text transform="translate(1149.00 680.40) rotate(-45)" text-anchor="end" dominant-baseline="central">2025-05-05</text><text transform="translate(1159.12 680.40) rotate(-45)" text-anchor="end" dominant-baseline="central">2025-05-12</text><text transform="translate(1169.24 680.40) rotate(-45)" text-anchor="end" dominant-baseline="central">2025-05-19</text><text transform="translate(1179.36 680.40) rotate(-45)" text-anchor="end" dominant-baseline="central">2025-05-26</text><text transform="translate(1189.48 680.40) rotate(-45)" text-anchor="end" dominant-baseline="central">2025-06-02</text><text transform="translate(1199.59 680.40) rotate(-45)" text-anchor="end" dominant-baseline="central">2025-06-09</text><text transform="translate(1209.71 680.40) rotate(-45)" text-anchor="end" dominant-baseline="central">2025-06-09</text><text transform="translate(1219.83 680.40) rotate(-45)" text-anchor="end" dominant-baseline="central">2025-06-16</text><text transform="translate(1229.95 680.40) rotate(-45)" text-anchor="end" dominant-baseline="central">2025-06-23</text><text transform="translate(1240.07 680.40) rotate(-45)" text-anchor="end" dominant-baseline="central">2025-06-30</text><text transform="translate(1250.19 680.40) rotate(-45)" text-anchor="end" dominant-baseline="central">2025-07-07</text><text transform="translate(1260.31 680.40) rotate(-45)" text-anchor="end" dominant-baseline="central">2025-07-14</text><text transform="translate(1270.42 680.40) rotate(-45)" text-anchor="end" dominant-baseline="central">2025-07-21</text><text transform="translate(1280.54 680.40) rotate(-45)" text-anchor="end" dominant-baseline="central">2025-07-28</text><text transform="translate(1290.66 680.40) rotate(-45)" text-anchor="end" dominant-baseline="central">2025-08-04</text><text transform="translate(1300.78 680.40) rotate(-45)" text-anchor="end" dominant-baseline="central">2025-08-11</text><text transform="translate(1310.90 680.40) rotate(-45)" text-anchor="end" dominant-baseline="central">2025-08-18</text><text transform="translate(1321.02 680.40) rotate(-45)" text-anchor="end" dominant-baseline="central">2025-08-25</text><text transform="translate(1331.14 680.40) rotate(-45)" text-anchor="end" dominant-baseline="central">2025-09-01</text><text transform="translate(1341.25 680.40) rotate(-45)" text-anchor="end" dominant-baseline="central">2025-09-08</text><text transform="translate(1351.37 680.40) rotate(-45)" text-anchor="end" dominant-baseline="central">2025-09-15</text><text transform="translate(1361.49 680.40) rotate(-45)" text-anchor="end" dominant-baseline="central">2025-09-22</text><text transform="translate(1371.61 680.40) rotate(-45)" text-anchor="end" dominant-baseline="central">2025-09-29</text><text transform="translate(1381.73 680.40) rotate(-45)" text-anchor="end" dominant-baseline="central">2025-10-06</text><text transform="translate(1391.85 680.40) rotate(-45)" text-anchor="end" dominant-baseline="central">2025-10-13</text><text transform="translate(1401.97 680.40) rotate(-45)" text-anchor="end" dominant-baseline="central">2025-10-20</text><text transform="translate(1412.08 680.40) rotate(-45)" text-anchor="end" dominant-baseline="central">2025-10-27</text><text transform="translate(1422.20 680.40) rotate(-45)" text-anchor="end" dominant-baseline="central">2025-10-27</text><text transform="translate(1432.32 680.40) rotate(-45)" text-anchor="end" dominant-baseline="central">2025-11-03</text><text transform="translate(1442.44 680.40) rotate(-45)" text-anchor="end" dominant-baseline="central">2025-11-10</text></g><path d="M66.31 608.80C66.31 608.80 71.38 610.00 76.43 610.00C81.50 610.00 81.47 608.50 86.55 608.50C91.59 608.50 92.18 608.50 96.67 609.40C102.30 610.53 101.15 617.20 106.78 617.20C111.27 617.20 111.88 616.94 116.90 616.20C122.00 615.44 122.07 614.20 127.02 614.20C132.19 614.20 132.11 617.90 137.14 617.90C142.22 617.90 142.23 615.99 147.26 613.90C152.35 611.79 152.16 611.20 157.38 609.50C162.28 607.90 162.57 608.83 167.50 607.30C172.69 605.68 172.61 603.20 177.61 603.20C182.73 603.20 182.84 605.24 187.73 607.90C192.96 610.74 192.96 614.20 197.85 614.20C203.07 614.20 202.61 609.86 207.97 606.50C212.73 603.51 212.90 603.68 218.09 601.50C223.01 599.43 223.68 598.00 228.21 598.00C233.80 598.00 233.40 602.10 238.33 606.50C243.52 611.15 244.87 616.10 248.44 616.10C254.98 616.10 251.35 596.92 258.56 592.70C261.47 591.00 265.72 591.00 268.68 591.00C275.84 591.00 274.07 613.70 278.80 613.70C284.19 613.70 281.95 587.30 288.92 587.30C292.07 587.30 294.86 590.37 299.04 595.10C304.98 601.82 302.87 604.11 309.16 610.20C312.99 613.91 314.07 614.70 319.27 614.70C324.19 614.70 324.41 612.00 329.39 612.00C334.53 612.00 335.08 615.80 339.51 615.80C345.20 615.80 344.07 610.34 349.63 606.30C354.19 602.99 355.06 601.10 359.75 601.10C365.17 601.10 367.03 609.50 369.87 609.50C377.15 609.50 372.52 591.55 379.99 577.30C382.64 572.25 384.64 570.90 390.10 570.90C394.76 570.90 398.31 570.90 400.22 572.10C408.43 577.26 403.79 614.70 410.34 614.70C413.91 614.70 414.52 603.37 420.46 593.10C424.64 585.87 427.51 579.70 430.58 579.70C437.63 579.70 435.75 617.00 440.70 617.00C445.87 617.00 443.11 595.68 450.82 577.90C453.23 572.33 457.33 570.30 460.94 570.30C467.45 570.30 464.39 590.80 471.05 590.80C474.51 590.80 477.40 588.96 481.17 584.60C487.52 577.26 485.20 567.40 491.29 567.40C495.32 567.40 498.20 575.90 501.41 575.90C508.32 575.90 508.04 549.30 511.53 549.30C518.16 549.30 513.24 602.40 521.65 602.40C523.36 602.40 526.70 600.18 531.77 598.00C536.82 595.83 536.81 595.81 541.88 593.70C546.93 591.61 549.43 589.60 552.00 589.60C559.54 589.60 555.96 619.90 562.12 619.90C566.07 619.90 565.58 608.27 572.24 602.10C575.69 598.90 578.47 598.90 582.36 598.90C588.59 598.90 586.54 606.70 592.48 612.60C596.65 616.75 600.68 619.00 602.60 619.00C610.79 619.00 607.41 568.90 612.71 568.90C617.52 568.90 617.68 614.10 622.83 614.10C627.79 614.10 626.12 570.70 632.95 570.70C636.24 570.70 638.79 579.80 643.07 589.60C648.91 602.95 645.70 617.00 653.19 617.00C655.82 617.00 658.84 615.30 663.31 615.30C668.96 615.30 667.98 623.40 673.43 623.40C678.10 623.40 678.26 619.78 683.54 618.80C688.38 617.90 688.60 618.35 693.66 617.90C698.72 617.45 698.76 617.00 703.78 617.00C708.88 617.00 709.09 617.29 713.90 619.00C719.21 620.89 718.70 622.36 724.02 624.20C728.82 625.86 729.12 626.00 734.14 626.00C739.24 626.00 741.29 626.00 744.26 623.40C751.41 617.12 747.44 600.30 754.38 600.30C757.56 600.30 759.46 605.90 764.49 605.90C769.57 605.90 770.91 600.10 774.61 600.10C781.03 600.10 779.04 617.60 784.73 617.60C789.15 617.60 788.96 605.60 794.85 605.60C799.08 605.60 799.64 610.60 804.97 610.60C809.76 610.60 810.11 610.60 815.09 610.00C820.23 609.38 820.20 608.83 825.21 607.30C830.32 605.73 830.24 605.46 835.32 603.80C840.35 602.16 843.64 603.80 845.44 600.70C853.76 586.42 850.94 553.00 855.56 553.00C861.06 553.00 857.14 610.20 865.68 610.20C867.26 610.20 871.10 606.50 875.80 606.50C881.22 606.50 880.50 613.70 885.92 613.70C890.62 613.70 890.84 611.31 896.04 610.00C900.96 608.76 902.97 610.00 906.15 608.60C913.09 605.55 911.89 588.80 916.27 588.80C922.01 588.80 923.10 616.10 926.39 616.10C933.21 616.10 930.92 556.70 936.51 556.70C941.04 556.70 940.36 604.40 946.63 604.40C950.48 604.40 950.06 576.20 956.75 576.20C960.18 576.20 963.35 581.08 966.87 587.80C973.47 600.43 969.88 614.90 976.98 614.90C979.99 614.90 981.71 610.80 987.10 608.00C991.83 605.55 992.20 606.31 997.22 604.40C1002.32 602.46 1002.15 601.92 1007.34 600.30C1012.27 598.77 1012.91 598.10 1017.46 598.10C1023.02 598.10 1023.38 605.70 1027.58 605.70C1033.50 605.70 1031.29 591.00 1037.70 591.00C1041.41 591.00 1043.13 591.13 1047.81 593.10C1053.25 595.38 1053.35 595.71 1057.93 599.50C1063.47 604.06 1062.33 605.59 1068.05 609.80C1072.45 613.04 1073.04 614.40 1078.17 614.40C1083.16 614.40 1086.23 614.40 1088.29 610.60C1096.35 595.68 1093.16 569.40 1098.41 569.40C1103.28 569.40 1100.71 607.50 1108.53 607.50C1110.83 607.50 1116.49 606.85 1118.65 601.80C1126.61 583.15 1123.51 560.10 1128.76 560.10C1133.63 560.10 1131.54 598.60 1138.88 598.60C1141.65 598.60 1144.29 587.50 1149.00 587.50C1154.41 587.50 1154.78 601.50 1159.12 601.50C1164.90 601.50 1164.30 580.80 1169.24 580.80C1174.41 580.80 1172.58 602.70 1179.36 602.70C1182.70 602.70 1184.95 596.40 1189.48 596.40C1195.07 596.40 1193.99 602.42 1199.59 607.10C1204.11 610.87 1205.73 613.30 1209.71 613.30C1215.85 613.30 1215.15 598.10 1219.83 598.10C1225.26 598.10 1224.94 616.70 1229.95 616.70C1235.06 616.70 1234.36 597.60 1240.07 597.60C1244.48 597.60 1244.49 604.87 1250.19 610.90C1254.61 615.57 1255.86 619.00 1260.31 619.00C1265.98 619.00 1264.62 611.66 1270.42 605.90C1274.74 601.61 1275.13 598.90 1280.54 598.90C1285.25 598.90 1286.95 598.92 1290.66 602.40C1297.07 608.42 1294.24 616.80 1300.78 617.90C1304.36 618.50 1305.84 618.27 1310.90 618.50C1315.95 618.72 1315.96 618.80 1321.02 618.80C1326.08 618.80 1326.91 618.80 1331.14 618.20C1337.03 617.36 1336.53 613.55 1341.25 608.30C1346.65 602.30 1345.84 595.70 1351.37 595.70C1355.96 595.70 1357.31 604.50 1361.49 604.50C1367.43 604.50 1366.71 588.40 1371.61 588.40C1376.82 588.40 1375.37 605.90 1381.73 605.90C1385.49 605.90 1387.36 599.50 1391.85 599.50C1397.48 599.50 1396.34 605.73 1401.97 610.60C1406.45 614.48 1406.62 615.59 1412.08 617.00C1416.74 618.20 1417.14 618.20 1422.20 618.20C1427.26 618.20 1429.22 618.20 1432.32 617.20C1439.33 614.94 1442.44 596.60 1442.44 596.60" fill="none" stroke="#80c66a" stroke-width="1.20" stroke-linejoin="round"/><path d="M66.31 630.80C66.31 630.80 71.24 642.90 76.43 642.90C81.36 642.90 81.12 636.95 86.55 631.80C91.23 627.35 91.75 623.70 96.67 623.70C101.87 623.70 101.66 633.00 106.78 633.00C111.78 633.00 111.16 624.20 116.90 624.20C121.27 624.20 123.48 624.20 127.02 625.50C133.60 627.91 131.82 641.50 137.14 641.50C141.94 641.50 141.00 627.70 147.26 627.70C151.12 627.70 153.48 630.70 157.38 630.70C163.60 630.70 162.33 617.20 167.50 617.20C172.45 617.20 172.66 623.42 177.61 629.80C182.78 636.47 182.17 643.30 187.73 643.30C192.29 643.30 192.20 633.90 197.85 633.90C202.32 633.90 203.71 638.00 207.97 638.00C213.83 638.00 212.71 626.90 218.09 626.90C222.82 626.90 225.00 635.40 228.21 635.40C235.12 635.40 230.97 608.80 238.33 608.80C241.09 608.80 244.41 609.09 248.44 612.30C254.53 617.14 253.56 624.90 258.56 624.90C263.68 624.90 264.50 611.80 268.68 611.80C274.62 611.80 273.43 633.00 278.80 633.00C283.54 633.00 282.14 614.90 288.92 614.90C292.26 614.90 295.34 614.90 299.04 616.40C305.46 619.00 302.71 631.00 309.16 631.00C312.83 631.00 314.28 631.00 319.27 631.00C324.40 631.00 324.54 628.70 329.39 628.70C334.66 628.70 334.38 633.60 339.51 633.60C344.50 633.60 344.46 631.21 349.63 629.50C354.58 627.86 355.62 629.50 359.75 626.90C365.74 623.13 366.45 615.60 369.87 615.60C376.56 615.60 372.66 631.58 379.99 643.50C382.77 648.03 384.85 648.50 390.10 648.50C394.97 648.50 395.36 647.73 400.22 645.90C405.48 643.93 406.88 645.04 410.34 640.90C417.00 632.94 413.80 621.70 420.46 621.70C423.91 621.70 426.36 623.07 430.58 626.60C436.48 631.52 434.70 633.95 440.70 638.60C444.82 641.80 448.04 642.30 450.82 642.30C458.16 642.30 454.24 615.60 460.94 615.60C464.36 615.60 467.30 619.97 471.05 626.10C477.42 636.52 474.28 648.70 481.17 648.70C484.40 648.70 485.91 643.00 491.29 643.00C496.03 643.00 496.36 644.40 501.41 644.40C506.48 644.40 506.58 642.70 511.53 642.70C516.70 642.70 517.25 646.20 521.65 646.20C527.37 646.20 525.90 636.60 531.77 636.60C536.02 636.60 536.89 636.60 541.88 636.60C547.01 636.60 546.89 635.02 552.00 634.30C557.00 633.60 557.87 633.60 562.12 633.60C567.99 633.60 568.60 643.30 572.24 643.30C578.72 643.30 576.63 620.50 582.36 620.50C586.75 620.50 588.52 636.70 592.48 636.70C598.63 636.70 596.33 608.80 602.60 608.80C606.45 608.80 606.57 624.00 612.71 624.00C616.69 624.00 620.00 617.90 622.83 617.90C630.12 617.90 627.30 646.50 632.95 646.50C637.41 646.50 636.49 624.80 643.07 624.80C646.61 624.80 647.57 630.18 653.19 632.80C657.69 634.90 658.23 633.95 663.31 634.90C668.35 635.85 669.79 634.90 673.43 636.60C679.90 639.63 677.03 651.44 683.54 651.80C687.15 652.00 691.11 652.00 693.66 652.00C701.23 652.00 698.63 637.81 703.78 623.70C708.74 610.11 709.95 596.60 713.90 596.60C720.07 596.60 715.90 621.92 724.02 640.60C726.02 645.20 728.87 643.59 734.14 645.20C738.99 646.69 740.73 645.20 744.26 646.80C750.85 649.80 747.75 663.10 754.38 663.10C757.87 663.10 759.44 663.10 764.49 663.10C769.56 663.10 769.72 663.10 774.61 662.30C779.84 661.45 779.57 658.40 784.73 658.40C789.68 658.40 789.74 659.84 794.85 660.80C799.86 661.74 800.01 662.20 804.97 662.20C810.12 662.20 809.92 660.12 815.09 659.00C820.04 657.92 820.17 657.80 825.21 657.80C830.29 657.80 830.31 658.49 835.32 659.60C840.43 660.74 840.32 662.30 845.44 662.30C850.44 662.30 850.51 661.67 855.56 661.00C860.62 660.32 860.68 660.61 865.68 659.60C870.80 658.56 870.74 656.90 875.80 656.90C880.86 656.90 880.95 659.60 885.92 659.60C891.06 659.60 891.67 658.72 896.04 655.70C901.79 651.72 900.27 648.10 906.15 645.60C910.39 643.80 911.86 643.80 916.27 643.80C921.98 643.80 922.02 652.40 926.39 652.40C932.14 652.40 932.18 645.73 936.51 638.20C942.30 628.13 939.66 617.20 946.63 617.20C949.78 617.20 954.10 617.20 956.75 620.20C964.22 628.66 961.22 634.44 966.87 648.20C971.34 659.09 971.47 669.50 976.98 669.50C981.59 669.50 980.56 652.60 987.10 652.60C990.68 652.60 992.47 653.84 997.22 656.30C1002.59 659.09 1002.17 659.88 1007.34 663.10C1012.29 666.18 1012.25 668.90 1017.46 668.90C1022.37 668.90 1022.50 664.60 1027.58 664.60C1032.62 664.60 1032.78 668.70 1037.70 668.70C1042.90 668.70 1042.42 663.10 1047.81 663.10C1052.54 663.10 1053.06 663.10 1057.93 663.70C1063.18 664.35 1065.98 667.80 1068.05 667.80C1076.10 667.80 1070.08 639.39 1078.17 626.60C1080.20 623.40 1083.21 623.40 1088.29 623.40C1093.33 623.40 1094.74 626.30 1098.41 626.30C1104.86 626.30 1102.68 617.87 1108.53 610.80C1112.80 605.62 1114.36 601.80 1118.65 601.80C1124.48 601.80 1123.52 609.63 1128.76 617.20C1133.64 624.23 1133.68 631.00 1138.88 631.00C1143.80 631.00 1145.98 625.74 1149.00 618.40C1156.10 601.14 1153.51 581.80 1159.12 581.80C1163.63 581.80 1164.44 610.60 1169.24 610.60C1174.56 610.60 1173.27 578.30 1179.36 578.30C1183.39 578.30 1183.56 588.86 1189.48 598.30C1193.68 605.01 1194.94 604.16 1199.59 610.60C1205.06 618.16 1205.49 618.01 1209.71 626.30C1215.61 637.86 1213.29 650.30 1219.83 650.30C1223.41 650.30 1225.16 645.55 1229.95 640.30C1235.28 634.45 1235.19 634.34 1240.07 628.10C1245.31 621.39 1245.08 614.40 1250.19 614.40C1255.20 614.40 1258.42 627.70 1260.31 627.70C1268.54 627.70 1263.08 555.50 1270.42 555.50C1273.20 555.50 1273.80 569.45 1280.54 581.10C1283.92 586.95 1287.74 590.50 1290.66 590.50C1297.85 590.50 1295.99 558.10 1300.78 558.10C1306.11 558.10 1303.54 594.50 1310.90 594.50C1313.66 594.50 1316.03 589.62 1321.02 584.60C1326.15 579.42 1328.17 574.10 1331.14 574.10C1338.28 574.10 1333.87 607.70 1341.25 607.70C1343.99 607.70 1347.59 599.50 1351.37 599.50C1357.71 599.50 1355.07 618.80 1361.49 618.80C1365.19 618.80 1369.08 616.85 1371.61 611.40C1379.20 595.05 1374.65 575.20 1381.73 575.20C1384.77 575.20 1386.90 581.42 1391.85 587.80C1397.02 594.47 1395.64 601.30 1401.97 601.30C1405.76 601.30 1407.02 601.05 1412.08 600.90C1417.14 600.75 1419.17 600.90 1422.20 600.70C1429.29 600.23 1427.12 579.30 1432.32 579.30C1437.24 579.30 1442.44 599.30 1442.44 599.30" fill="none" stroke="#3f5cc8" stroke-width="1.20" stroke-linejoin="round"/><g fill="#fff" stroke="#80c66a" stroke-width="1.60"><circle cx="66.31" cy="608.80" r="1.90"/><circle cx="76.43" cy="610.00" r="1.90"/><circle cx="86.55" cy="608.50" r="1.90"/><circle cx="96.67" cy="609.40" r="1.90"/><circle cx="106.78" cy="617.20" r="1.90"/><circle cx="116.90" cy="616.20" r="1.90"/><circle cx="127.02" cy="614.20" r="1.90"/><circle cx="137.14" cy="617.90" r="1.90"/><circle cx="147.26" cy="613.90" r="1.90"/><circle cx="157.38" cy="609.50" r="1.90"/><circle cx="167.50" cy="607.30" r="1.90"/><circle cx="177.61" cy="603.20" r="1.90"/><circle cx="187.73" cy="607.90" r="1.90"/><circle cx="197.85" cy="614.20" r="1.90"/><circle cx="207.97" cy="606.50" r="1.90"/><circle cx="218.09" cy="601.50" r="1.90"/><circle cx="228.21" cy="598.00" r="1.90"/><circle cx="238.33" cy="606.50" r="1.90"/><circle cx="248.44" cy="616.10" r="1.90"/><circle cx="258.56" cy="592.70" r="1.90"/><circle cx="268.68" cy="591.00" r="1.90"/><circle cx="278.80" cy="613.70" r="1.90"/><circle cx="288.92" cy="587.30" r="1.90"/><circle cx="299.04" cy="595.10" r="1.90"/><circle cx="309.16" cy="610.20" r="1.90"/><circle cx="319.27" cy="614.70" r="1.90"/><circle cx="329.39" cy="612.00" r="1.90"/><circle cx="339.51" cy="615.80" r="1.90"/><circle cx="349.63" cy="606.30" r="1.90"/><circle cx="359.75" cy="601.10" r="1.90"/><circle cx="369.87" cy="609.50" r="1.90"/><circle cx="379.99" cy="577.30" r="1.90"/><circle cx="390.10" cy="570.90" r="1.90"/><circle cx="400.22" cy="572.10" r="1.90"/><circle cx="410.34" cy="614.70" r="1.90"/><circle cx="420.46" cy="593.10" r="1.90"/><circle cx="430.58" cy="579.70" r="1.90"/><circle cx="440.70" cy="617.00" r="1.90"/><circle cx="450.82" cy="577.90" r="1.90"/><circle cx="460.94" cy="570.30" r="1.90"/><circle cx="471.05" cy="590.80" r="1.90"/><circle cx="481.17" cy="584.60" r="1.90"/><circle cx="491.29" cy="567.40" r="1.90"/><circle cx="501.41" cy="575.90" r="1.90"/><circle cx="511.53" cy="549.30" r="1.90"/><circle cx="521.65" cy="602.40" r="1.90"/><circle cx="531.77" cy="598.00" r="1.90"/><circle cx="541.88" cy="593.70" r="1.90"/><circle cx="552.00" cy="589.60" r="1.90"/><circle cx="562.12" cy="619.90" r="1.90"/><circle cx="572.24" cy="602.10" r="1.90"/><circle cx="582.36" cy="598.90" r="1.90"/><circle cx="592.48" cy="612.60" r="1.90"/><circle cx="602.60" cy="619.00" r="1.90"/><circle cx="612.71" cy="568.90" r="1.90"/><circle cx="622.83" cy="614.10" r="1.90"/><circle cx="632.95" cy="570.70" r="1.90"/><circle cx="643.07" cy="589.60" r="1.90"/><circle cx="653.19" cy="617.00" r="1.90"/><circle cx="663.31" cy="615.30" r="1.90"/><circle cx="673.43" cy="623.40" r="1.90"/><circle cx="683.54" cy="618.80" r="1.90"/><circle cx="693.66" cy="617.90" r="1.90"/><circle cx="703.78" cy="617.00" r="1.90"/><circle cx="713.90" cy="619.00" r="1.90"/><circle cx="724.02" cy="624.20" r="1.90"/><circle cx="734.14" cy="626.00" r="1.90"/><circle cx="744.26" cy="623.40" r="1.90"/><circle cx="754.38" cy="600.30" r="1.90"/><circle cx="764.49" cy="605.90" r="1.90"/><circle cx="774.61" cy="600.10" r="1.90"/><circle cx="784.73" cy="617.60" r="1.90"/><circle cx="794.85" cy="605.60" r="1.90"/><circle cx="804.97" cy="610.60" r="1.90"/><circle cx="815.09" cy="610.00" r="1.90"/><circle cx="825.21" cy="607.30" r="1.90"/><circle cx="835.32" cy="603.80" r="1.90"/><circle cx="845.44" cy="600.70" r="1.90"/><circle cx="855.56" cy="553.00" r="1.90"/><circle cx="865.68" cy="610.20" r="1.90"/><circle cx="875.80" cy="606.50" r="1.90"/><circle cx="885.92" cy="613.70" r="1.90"/><circle cx="896.04" cy="610.00" r="1.90"/><circle cx="906.15" cy="608.60" r="1.90"/><circle cx="916.27" cy="588.80" r="1.90"/><circle cx="926.39" cy="616.10" r="1.90"/><circle cx="936.51" cy="556.70" r="1.90"/><circle cx="946.63" cy="604.40" r="1.90"/><circle cx="956.75" cy="576.20" r="1.90"/><circle cx="966.87" cy="587.80" r="1.90"/><circle cx="976.98" cy="614.90" r="1.90"/><circle cx="987.10" cy="608.00" r="1.90"/><circle cx="997.22" cy="604.40" r="1.90"/><circle cx="1007.34" cy="600.30" r="1.90"/><circle cx="1017.46" cy="598.10" r="1.90"/><circle cx="1027.58" cy="605.70" r="1.90"/><circle cx="1037.70" cy="591.00" r="1.90"/><circle cx="1047.81" cy="593.10" r="1.90"/><circle cx="1057.93" cy="599.50" r="1.90"/><circle cx="1068.05" cy="609.80" r="1.90"/><circle cx="1078.17" cy="614.40" r="1.90"/><circle cx="1088.29" cy="610.60" r="1.90"/><circle cx="1098.41" cy="569.40" r="1.90"/><circle cx="1108.53" cy="607.50" r="1.90"/><circle cx="1118.65" cy="601.80" r="1.90"/><circle cx="1128.76" cy="560.10" r="1.90"/><circle cx="1138.88" cy="598.60" r="1.90"/><circle cx="1149.00" cy="587.50" r="1.90"/><circle cx="1159.12" cy="601.50" r="1.90"/><circle cx="1169.24" cy="580.80" r="1.90"/><circle cx="1179.36" cy="602.70" r="1.90"/><circle cx="1189.48" cy="596.40" r="1.90"/><circle cx="1199.59" cy="607.10" r="1.90"/><circle cx="1209.71" cy="613.30" r="1.90"/><circle cx="1219.83" cy="598.10" r="1.90"/><circle cx="1229.95" cy="616.70" r="1.90"/><circle cx="1240.07" cy="597.60" r="1.90"/><circle cx="1250.19" cy="610.90" r="1.90"/><circle cx="1260.31" cy="619.00" r="1.90"/><circle cx="1270.42" cy="605.90" r="1.90"/><circle cx="1280.54" cy="598.90" r="1.90"/><circle cx="1290.66" cy="602.40" r="1.90"/><circle cx="1300.78" cy="617.90" r="1.90"/><circle cx="1310.90" cy="618.50" r="1.90"/><circle cx="1321.02" cy="618.80" r="1.90"/><circle cx="1331.14" cy="618.20" r="1.90"/><circle cx="1341.25" cy="608.30" r="1.90"/><circle cx="1351.37" cy="595.70" r="1.90"/><circle cx="1361.49" cy="604.50" r="1.90"/><circle cx="1371.61" cy="588.40" r="1.90"/><circle cx="1381.73" cy="605.90" r="1.90"/><circle cx="1391.85" cy="599.50" r="1.90"/><circle cx="1401.97" cy="610.60" r="1.90"/><circle cx="1412.08" cy="617.00" r="1.90"/><circle cx="1422.20" cy="618.20" r="1.90"/><circle cx="1432.32" cy="617.20" r="1.90"/><circle cx="1442.44" cy="596.60" r="1.90"/></g><g fill="#fff" stroke="#3f5cc8" stroke-width="1.60"><circle cx="66.31" cy="630.80" r="1.90"/><circle cx="76.43" cy="642.90" r="1.90"/><circle cx="86.55" cy="631.80" r="1.90"/><circle cx="96.67" cy="623.70" r="1.90"/><circle cx="106.78" cy="633.00" r="1.90"/><circle cx="116.90" cy="624.20" r="1.90"/><circle cx="127.02" cy="625.50" r="1.90"/><circle cx="137.14" cy="641.50" r="1.90"/><circle cx="147.26" cy="627.70" r="1.90"/><circle cx="157.38" cy="630.70" r="1.90"/><circle cx="167.50" cy="617.20" r="1.90"/><circle cx="177.61" cy="629.80" r="1.90"/><circle cx="187.73" cy="643.30" r="1.90"/><circle cx="197.85" cy="633.90" r="1.90"/><circle cx="207.97" cy="638.00" r="1.90"/><circle cx="218.09" cy="626.90" r="1.90"/><circle cx="228.21" cy="635.40" r="1.90"/><circle cx="238.33" cy="608.80" r="1.90"/><circle cx="248.44" cy="612.30" r="1.90"/><circle cx="258.56" cy="624.90" r="1.90"/><circle cx="268.68" cy="611.80" r="1.90"/><circle cx="278.80" cy="633.00" r="1.90"/><circle cx="288.92" cy="614.90" r="1.90"/><circle cx="299.04" cy="616.40" r="1.90"/><circle cx="309.16" cy="631.00" r="1.90"/><circle cx="319.27" cy="631.00" r="1.90"/><circle cx="329.39" cy="628.70" r="1.90"/><circle cx="339.51" cy="633.60" r="1.90"/><circle cx="349.63" cy="629.50" r="1.90"/><circle cx="359.75" cy="626.90" r="1.90"/><circle cx="369.87" cy="615.60" r="1.90"/><circle cx="379.99" cy="643.50" r="1.90"/><circle cx="390.10" cy="648.50" r="1.90"/><circle cx="400.22" cy="645.90" r="1.90"/><circle cx="410.34" cy="640.90" r="1.90"/><circle cx="420.46" cy="621.70" r="1.90"/><circle cx="430.58" cy="626.60" r="1.90"/><circle cx="440.70" cy="638.60" r="1.90"/><circle cx="450.82" cy="642.30" r="1.90"/><circle cx="460.94" cy="615.60" r="1.90"/><circle cx="471.05" cy="626.10" r="1.90"/><circle cx="481.17" cy="648.70" r="1.90"/><circle cx="491.29" cy="643.00" r="1.90"/><circle cx="501.41" cy="644.40" r="1.90"/><circle cx="511.53" cy="642.70" r="1.90"/><circle cx="521.65" cy="646.20" r="1.90"/><circle cx="531.77" cy="636.60" r="1.90"/><circle cx="541.88" cy="636.60" r="1.90"/><circle cx="552.00" cy="634.30" r="1.90"/><circle cx="562.12" cy="633.60" r="1.90"/><circle cx="572.24" cy="643.30" r="1.90"/><circle cx="582.36" cy="620.50" r="1.90"/><circle cx="592.48" cy="636.70" r="1.90"/><circle cx="602.60" cy="608.80" r="1.90"/><circle cx="612.71" cy="624.00" r="1.90"/><circle cx="622.83" cy="617.90" r="1.90"/><circle cx="632.95" cy="646.50" r="1.90"/><circle cx="643.07" cy="624.80" r="1.90"/><circle cx="653.19" cy="632.80" r="1.90"/><circle cx="663.31" cy="634.90" r="1.90"/><circle cx="673.43" cy="636.60" r="1.90"/><circle cx="683.54" cy="651.80" r="1.90"/><circle cx="693.66" cy="652.00" r="1.90"/><circle cx="703.78" cy="623.70" r="1.90"/><circle cx="713.90" cy="596.60" r="1.90"/><circle cx="724.02" cy="640.60" r="1.90"/><circle cx="734.14" cy="645.20" r="1.90"/><circle cx="744.26" cy="646.80" r="1.90"/><circle cx="754.38" cy="663.10" r="1.90"/><circle cx="764.49" cy="663.10" r="1.90"/><circle cx="774.61" cy="662.30" r="1.90"/><circle cx="784.73" cy="658.40" r="1.90"/><circle cx="794.85" cy="660.80" r="1.90"/><circle cx="804.97" cy="662.20" r="1.90"/><circle cx="815.09" cy="659.00" r="1.90"/><circle cx="825.21" cy="657.80" r="1.90"/><circle cx="835.32" cy="659.60" r="1.90"/><circle cx="845.44" cy="662.30" r="1.90"/><circle cx="855.56" cy="661.00" r="1.90"/><circle cx="865.68" cy="659.60" r="1.90"/><circle cx="875.80" cy="656.90" r="1.90"/><circle cx="885.92" cy="659.60" r="1.90"/><circle cx="896.04" cy="655.70" r="1.90"/><circle cx="906.15" cy="645.60" r="1.90"/><circle cx="916.27" cy="643.80" r="1.90"/><circle cx="926.39" cy="652.40" r="1.90"/><circle cx="936.51" cy="638.20" r="1.90"/><circle cx="946.63" cy="617.20" r="1.90"/><circle cx="956.75" cy="620.20" r="1.90"/><circle cx="966.87" cy="648.20" r="1.90"/><circle cx="976.98" cy="669.50" r="1.90"/><circle cx="987.10" cy="652.60" r="1.90"/><circle cx="997.22" cy="656.30" r="1.90"/><circle cx="1007.34" cy="663.10" r="1.90"/><circle cx="1017.46" cy="668.90" r="1.90"/><circle cx="1027.58" cy="664.60" r="1.90"/><circle cx="1037.70" cy="668.70" r="1.90"/><circle cx="1047.81" cy="663.10" r="1.90"/><circle cx="1057.93" cy="663.70" r="1.90"/><circle cx="1068.05" cy="667.80" r="1.90"/><circle cx="1078.17" cy="626.60" r="1.90"/><circle cx="1088.29" cy="623.40" r="1.90"/><circle cx="1098.41" cy="626.30" r="1.90"/><circle cx="1108.53" cy="610.80" r="1.90"/><circle cx="1118.65" cy="601.80" r="1.90"/><circle cx="1128.76" cy="617.20" r="1.90"/><circle cx="1138.88" cy="631.00" r="1.90"/><circle cx="1149.00" cy="618.40" r="1.90"/><circle cx="1159.12" cy="581.80" r="1.90"/><circle cx="1169.24" cy="610.60" r="1.90"/><circle cx="1179.36" cy="578.30" r="1.90"/><circle cx="1189.48" cy="598.30" r="1.90"/><circle cx="1199.59" cy="610.60" r="1.90"/><circle cx="1209.71" cy="626.30" r="1.90"/><circle cx="1219.83" cy="650.30" r="1.90"/><circle cx="1229.95" cy="640.30" r="1.90"/><circle cx="1240.07" cy="628.10" r="1.90"/><circle cx="1250.19" cy="614.40" r="1.90"/><circle cx="1260.31" cy="627.70" r="1.90"/><circle cx="1270.42" cy="555.50" r="1.90"/><circle cx="1280.54" cy="581.10" r="1.90"/><circle cx="1290.66" cy="590.50" r="1.90"/><circle cx="1300.78" cy="558.10" r="1.90"/><circle cx="1310.90" cy="594.50" r="1.90"/><circle cx="1321.02" cy="584.60" r="1.90"/><circle cx="1331.14" cy="574.10" r="1.90"/><circle cx="1341.25" cy="607.70" r="1.90"/><circle cx="1351.37" cy="599.50" r="1.90"/><circle cx="1361.49" cy="618.80" r="1.90"/><circle cx="1371.61" cy="611.40" r="1.90"/><circle cx="1381.73" cy="575.20" r="1.90"/><circle cx="1391.85" cy="587.80" r="1.90"/><circle cx="1401.97" cy="601.30" r="1.90"/><circle cx="1412.08" cy="600.90" r="1.90"/><circle cx="1422.20" cy="600.70" r="1.90"/><circle cx="1432.32" cy="579.30" r="1.90"/><circle cx="1442.44" cy="599.30" r="1.90"/></g></svg><div class="a " style="left:1459px;top:666px;font-size:11px;line-height:14px;color:#333">时</div><svg class="a" style="left:55px;top:722px" width="1405" height="32" viewBox="55 722 1405 32">
<rect x="64.5" y="725.8" width="1384.5" height="6" fill="#dfe4f2"/><g fill="#fff"><rect x="753.9" y="728.3" width="1.1" height="1.3"/><rect x="756.1" y="728.3" width="1.1" height="1.3"/><rect x="758.3" y="728.3" width="1.1" height="1.3"/></g>
<rect x="64.5" y="731.8" width="1384.5" height="18" fill="#e8f1fc"/>
<path d="M64.50 741.43L74.68 742.38L84.86 741.51L95.04 740.88L105.22 741.60L115.40 740.92L125.58 741.02L135.76 742.27L145.94 741.19L156.12 741.42L166.30 740.37L176.48 741.35L186.66 742.41L196.84 741.67L207.02 742.00L217.20 741.13L227.38 741.79L237.56 739.71L247.74 739.98L257.92 740.97L268.10 739.95L278.28 741.60L288.46 740.19L298.64 740.31L308.82 741.45L319.00 741.45L329.18 741.27L339.36 741.65L349.54 741.33L359.72 741.13L369.90 740.24L380.08 742.43L390.26 742.82L400.44 742.61L410.62 742.22L420.81 740.72L430.99 741.10L441.17 742.04L451.35 742.33L461.53 740.24L471.71 741.06L481.89 742.83L492.07 742.39L502.25 742.50L512.43 742.36L522.61 742.64L532.79 741.89L542.97 741.89L553.15 741.71L563.33 741.65L573.51 742.41L583.69 740.63L593.87 741.89L604.05 739.71L614.23 740.90L624.41 740.42L634.59 742.66L644.77 740.96L654.95 741.59L665.13 741.75L675.31 741.89L685.49 743.08L695.67 743.09L705.85 740.88L716.03 738.76L726.21 742.20L736.39 742.56L746.57 742.68L756.75 743.96L766.93 743.96L777.11 743.90L787.29 743.59L797.47 743.78L807.65 743.89L817.83 743.64L828.01 743.55L838.19 743.69L848.37 743.90L858.55 743.80L868.73 743.69L878.91 743.47L889.09 743.69L899.27 743.38L909.45 742.59L919.63 742.45L929.81 743.12L939.99 742.01L950.17 740.37L960.35 740.60L970.53 742.79L980.71 744.46L990.89 743.14L1001.07 743.43L1011.25 743.96L1021.43 744.41L1031.61 744.08L1041.79 744.40L1051.97 743.96L1062.15 744.01L1072.33 744.33L1082.51 741.10L1092.69 740.85L1102.88 741.08L1113.06 739.87L1123.24 739.16L1133.42 740.37L1143.60 741.45L1153.78 740.46L1163.96 737.60L1174.14 739.85L1184.32 737.32L1194.50 738.89L1204.68 739.85L1214.86 741.08L1225.04 742.96L1235.22 742.18L1245.40 741.22L1255.58 740.15L1265.76 741.19L1275.94 735.54L1286.12 737.54L1296.30 738.28L1306.48 735.74L1316.66 738.59L1326.84 737.82L1337.02 736.99L1347.20 739.62L1357.38 738.98L1367.56 740.49L1377.74 739.91L1387.92 737.08L1398.10 738.07L1408.28 739.12L1418.46 739.09L1428.64 739.08L1438.82 737.40L1449.00 738.97L1449.00 749.30L64.50 749.30Z" fill="#d6e5f9"/>
<path d="M64.50 741.43L74.68 742.38L84.86 741.51L95.04 740.88L105.22 741.60L115.40 740.92L125.58 741.02L135.76 742.27L145.94 741.19L156.12 741.42L166.30 740.37L176.48 741.35L186.66 742.41L196.84 741.67L207.02 742.00L217.20 741.13L227.38 741.79L237.56 739.71L247.74 739.98L257.92 740.97L268.10 739.95L278.28 741.60L288.46 740.19L298.64 740.31L308.82 741.45L319.00 741.45L329.18 741.27L339.36 741.65L349.54 741.33L359.72 741.13L369.90 740.24L380.08 742.43L390.26 742.82L400.44 742.61L410.62 742.22L420.81 740.72L430.99 741.10L441.17 742.04L451.35 742.33L461.53 740.24L471.71 741.06L481.89 742.83L492.07 742.39L502.25 742.50L512.43 742.36L522.61 742.64L532.79 741.89L542.97 741.89L553.15 741.71L563.33 741.65L573.51 742.41L583.69 740.63L593.87 741.89L604.05 739.71L614.23 740.90L624.41 740.42L634.59 742.66L644.77 740.96L654.95 741.59L665.13 741.75L675.31 741.89L685.49 743.08L695.67 743.09L705.85 740.88L716.03 738.76L726.21 742.20L736.39 742.56L746.57 742.68L756.75 743.96L766.93 743.96L777.11 743.90L787.29 743.59L797.47 743.78L807.65 743.89L817.83 743.64L828.01 743.55L838.19 743.69L848.37 743.90L858.55 743.80L868.73 743.69L878.91 743.47L889.09 743.69L899.27 743.38L909.45 742.59L919.63 742.45L929.81 743.12L939.99 742.01L950.17 740.37L960.35 740.60L970.53 742.79L980.71 744.46L990.89 743.14L1001.07 743.43L1011.25 743.96L1021.43 744.41L1031.61 744.08L1041.79 744.40L1051.97 743.96L1062.15 744.01L1072.33 744.33L1082.51 741.10L1092.69 740.85L1102.88 741.08L1113.06 739.87L1123.24 739.16L1133.42 740.37L1143.60 741.45L1153.78 740.46L1163.96 737.60L1174.14 739.85L1184.32 737.32L1194.50 738.89L1204.68 739.85L1214.86 741.08L1225.04 742.96L1235.22 742.18L1245.40 741.22L1255.58 740.15L1265.76 741.19L1275.94 735.54L1286.12 737.54L1296.30 738.28L1306.48 735.74L1316.66 738.59L1326.84 737.82L1337.02 736.99L1347.20 739.62L1357.38 738.98L1367.56 740.49L1377.74 739.91L1387.92 737.08L1398.10 738.07L1408.28 739.12L1418.46 739.09L1428.64 739.08L1438.82 737.40L1449.00 738.97" fill="none" stroke="#a8c6f4" stroke-width="1"/>
<path d="M64.5 731.5 V749.5 M1449 731.5 V749.5" stroke="#b9c6dc" stroke-width="1"/>
<rect x="62.4" y="735" width="4.3" height="11" rx="1" fill="#5b8ac2"/>
<rect x="1446.8" y="735" width="4.3" height="11" rx="1" fill="#5b8ac2"/>
</svg></div></div></body></html>
